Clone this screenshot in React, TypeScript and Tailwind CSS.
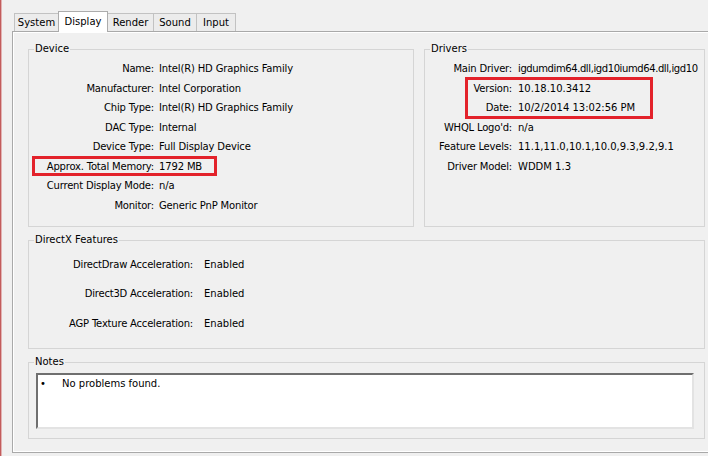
import React from "react";

function Tab({ label, width, selected }: { label: string; width: number; selected?: boolean }) {
  if (selected) {
    return (
      <div
        className="relative z-10 -mb-px -ml-px h-[21px] flex items-center justify-center bg-white border border-b-0 border-[#acacac] pb-[2px]"
        style={{ width }}
      >
        {label}
      </div>
    );
  }
  return (
    <div
      className="-ml-px first:ml-0 h-[18px] flex items-center justify-center bg-[#ececec] border border-b-0 border-[#c2c2c2]"
      style={{ width }}
    >
      {label}
    </div>
  );
}

function GroupBox({
  title,
  className,
  children,
}: {
  title: string;
  className: string;
  children?: React.ReactNode;
}) {
  return (
    <div className={"relative border border-[#d5d5d5] shrink-0 " + className}>
      <div className="absolute -top-[7px] left-[5px] px-[1px] h-[12px] leading-[12px] bg-[#f0f0f0]">{title}</div>
      {children}
    </div>
  );
}

function InfoRow({
  label,
  value,
  labelW,
  gap,
}: {
  label: string;
  value: string;
  labelW: string;
  gap: string;
}) {
  return (
    <div className="flex items-center h-[19.5px] whitespace-nowrap">
      <div className={"text-right shrink-0 tracking-[-0.2px] " + labelW}>{label}</div>
      <div className={"shrink-0 " + gap}>{value}</div>
    </div>
  );
}

export default function App() {
  const device: [string, string][] = [
    ["Name:", "Intel(R) HD Graphics Family"],
    ["Manufacturer:", "Intel Corporation"],
    ["Chip Type:", "Intel(R) HD Graphics Family"],
    ["DAC Type:", "Internal"],
    ["Device Type:", "Full Display Device"],
    ["Approx. Total Memory:", "1792 MB"],
    ["Current Display Mode:", "n/a"],
    ["Monitor:", "Generic PnP Monitor"],
  ];
  const drivers: [string, string, string][] = [
    ["Main Driver:", "igdumdim64.dll,igd10iumd64.dll,igd10", "ml-[6px] tracking-[-0.4px]"],
    ["Version:", "10.18.10.3412", "ml-[6px]"],
    ["Date:", "10/2/2014 13:02:56 PM", "ml-[6px]"],
    ["WHQL Logo'd:", "n/a", "ml-[6px]"],
    ["Feature Levels:", "11.1,11.0,10.1,10.0,9.3,9.2,9.1", "ml-[6px]"],
    ["Driver Model:", "WDDM 1.3", "ml-[6px]"],
  ];
  const dx: [string, string][] = [
    ["DirectDraw Acceleration:", "Enabled"],
    ["Direct3D Acceleration:", "Enabled"],
    ["AGP Texture Acceleration:", "Enabled"],
  ];

  return (
    <div className="w-[708px] h-[456px] bg-[#f0f0f0] flex overflow-hidden text-black text-[10px] font-['DejaVu_Sans',sans-serif]">
      <div className="w-[1px] h-full bg-[#c25c5c] shrink-0" />
      <div className="w-[1px] h-full bg-[#e2b2b2] shrink-0" />
      <div className="pl-[10px] pt-[11px] flex flex-col">
        {/* Tabs */}
        <div className="flex items-end h-[20px] pl-[2px]">
          <Tab label="System" width={45} />
          <Tab label="Display" width={50} selected />
          <Tab label="Render" width={47} />
          <Tab label="Sound" width={44} />
          <Tab label="Input" width={40} />
        </div>
        {/* Panel */}
        <div className="w-[700px] border border-[#a9a9a9] bg-[#f0f0f0] shadow-[inset_1px_1px_0_#ffffff,inset_0_-1px_0_#ffffff] pl-[15px] pt-[17px] pb-[13px] flex flex-col gap-[13px]">
          <div className="flex gap-[10px]">
            <GroupBox title="Device" className="w-[386px] h-[178px] pt-[9px]">
              {device.map(([l, v]) => (
                <InfoRow key={l} label={l} value={v} labelW="w-[125px]" gap="ml-[5px] tracking-[-0.15px]" />
              ))}
              <div className="absolute left-[3px] top-[106px] w-[185px] h-[20px] border-[3px] border-[#e3222b]" />
            </GroupBox>
            <GroupBox title="Drivers" className="w-[281px] h-[178px] pt-[9px]">
              {drivers.map(([l, v, g]) => (
                <InfoRow key={l} label={l} value={v} labelW="w-[87px]" gap={g} />
              ))}
              <div className="absolute left-[40px] top-[27px] w-[188px] h-[42px] border-[3px] border-[#e3222b]" />
            </GroupBox>
          </div>
          <GroupBox title="DirectX Features" className="w-[677px] h-[109px] pt-[13px]">
            <div className="flex flex-col gap-[9.5px]">
              {dx.map(([l, v]) => (
                <div key={l} className="flex items-center h-[20px] whitespace-nowrap">
                  <div className="w-[164px] text-right shrink-0 tracking-[-0.2px]">{l}</div>
                  <div className="ml-[11px]">{v}</div>
                </div>
              ))}
            </div>
          </GroupBox>
          <GroupBox title="Notes" className="w-[677px] h-[77px] pt-[10px] pl-[7px]">
            <div className="w-[658px] h-[56px] bg-white border-2 border-t-[#6f6f6f] border-l-[#6f6f6f] border-r-[#e3e3e3] border-b-[#e3e3e3] pl-[2px]">
              <div className="flex items-center h-[16px]">
                <span className="w-[22px]">•</span>
                <span>No problems found.</span>
              </div>
            </div>
          </GroupBox>
        </div>
      </div>
    </div>
  );
}
